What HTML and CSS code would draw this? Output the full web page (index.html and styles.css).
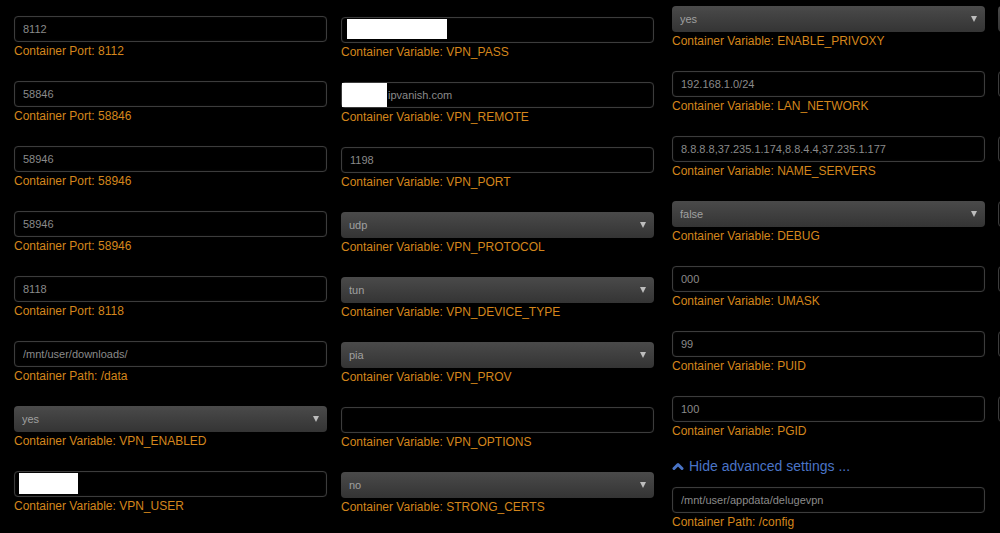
FILE: index.html
```html
<!DOCTYPE html>
<html lang="en">
    <head>
        <meta charset="UTF-8">
        <meta name="viewport" content="width=device-width, initial-scale=1.0">
        <title>Docker - DelugeVPN</title>
        <link rel="stylesheet" href="styles.css">
    </head>
<body>
    <div class="columns">
        <!-- ports and first vpn vars -->
        <div class="column col-1">
            <div class="field">
                <div class="control"><input class="text-input" type="text" value="8112"></div>
                <div class="hint">Container Port: 8112</div>
            </div>
            <div class="field">
                <div class="control"><input class="text-input" type="text" value="58846"></div>
                <div class="hint">Container Port: 58846</div>
            </div>
            <div class="field">
                <div class="control"><input class="text-input" type="text" value="58946"></div>
                <div class="hint">Container Port: 58946</div>
            </div>
            <div class="field">
                <div class="control"><input class="text-input" type="text" value="58946"></div>
                <div class="hint">Container Port: 58946</div>
            </div>
            <div class="field">
                <div class="control"><input class="text-input" type="text" value="8118"></div>
                <div class="hint">Container Port: 8118</div>
            </div>
            <div class="field">
                <div class="control"><input class="text-input" type="text" value="/mnt/user/downloads/"></div>
                <div class="hint">Container Path: /data</div>
            </div>
            <div class="field">
                <div class="control select-wrap">
                    <select class="select-input"><option selected>yes</option><option>no</option></select>
                </div>
                <div class="hint">Container Variable: VPN_ENABLED</div>
            </div>
            <div class="field">
                <div class="control">
                    <input class="text-input" type="text" value="">
                    <span class="redact redact-user"></span>
                </div>
                <div class="hint">Container Variable: VPN_USER</div>
            </div>
        </div>

        <div class="column col-2">
            <div class="field">
                <div class="control">
                    <input class="text-input" type="password" value="">
                    <span class="redact redact-pass"></span>
                </div>
                <div class="hint">Container Variable: VPN_PASS</div>
            </div>
            <div class="field">
                <div class="control">
                    <input class="text-input after-redact" type="text" value="ipvanish.com">
                    <span class="redact redact-remote"></span>
                </div>
                <div class="hint">Container Variable: VPN_REMOTE</div>
            </div>
            <div class="field">
                <div class="control"><input class="text-input" type="text" value="1198"></div>
                <div class="hint">Container Variable: VPN_PORT</div>
            </div>
            <div class="field">
                <div class="control select-wrap">
                    <select class="select-input"><option selected>udp</option><option>tcp</option></select>
                </div>
                <div class="hint">Container Variable: VPN_PROTOCOL</div>
            </div>
            <div class="field">
                <div class="control select-wrap">
                    <select class="select-input"><option selected>tun</option><option>tap</option></select>
                </div>
                <div class="hint">Container Variable: VPN_DEVICE_TYPE</div>
            </div>
            <div class="field">
                <div class="control select-wrap">
                    <select class="select-input"><option selected>pia</option><option>airvpn</option><option>custom</option></select>
                </div>
                <div class="hint">Container Variable: VPN_PROV</div>
            </div>
            <div class="field">
                <div class="control"><input class="text-input" type="text" value=""></div>
                <div class="hint">Container Variable: VPN_OPTIONS</div>
            </div>
            <div class="field">
                <div class="control select-wrap">
                    <select class="select-input"><option selected>no</option><option>yes</option></select>
                </div>
                <div class="hint">Container Variable: STRONG_CERTS</div>
            </div>
        </div>

        <div class="column col-3">
            <div class="field">
                <div class="control select-wrap">
                    <select class="select-input"><option selected>yes</option><option>no</option></select>
                </div>
                <div class="hint">Container Variable: ENABLE_PRIVOXY</div>
            </div>
            <div class="field">
                <div class="control"><input class="text-input" type="text" value="192.168.1.0/24"></div>
                <div class="hint">Container Variable: LAN_NETWORK</div>
            </div>
            <div class="field">
                <div class="control"><input class="text-input" type="text" value="8.8.8.8,37.235.1.174,8.8.4.4,37.235.1.177"></div>
                <div class="hint">Container Variable: NAME_SERVERS</div>
            </div>
            <div class="field">
                <div class="control select-wrap">
                    <select class="select-input"><option selected>false</option><option>true</option></select>
                </div>
                <div class="hint">Container Variable: DEBUG</div>
            </div>
            <div class="field">
                <div class="control"><input class="text-input" type="text" value="000"></div>
                <div class="hint">Container Variable: UMASK</div>
            </div>
            <div class="field">
                <div class="control"><input class="text-input" type="text" value="99"></div>
                <div class="hint">Container Variable: PUID</div>
            </div>
            <div class="field">
                <div class="control"><input class="text-input" type="text" value="100"></div>
                <div class="hint">Container Variable: PGID</div>
            </div>

            <a href="#" class="advanced-toggle">
                <svg width="12" height="10" viewBox="0 0 12 10" fill="none" stroke="currentColor" stroke-width="3" stroke-linecap="round" stroke-linejoin="round">
                    <polyline points="2 7.5 6 3.5 10 7.5"></polyline>
                </svg>
                <span>Hide advanced settings ...</span>
            </a>

            <div class="field">
                <div class="control"><input class="text-input" type="text" value="/mnt/user/appdata/delugevpn"></div>
                <div class="hint">Container Path: /config</div>
            </div>
        </div>

        <!-- next column, only its left edge shows in the window -->
        <div class="column col-4">
            <div class="field">
                <div class="control select-wrap">
                    <select class="select-input"><option selected>&nbsp;</option></select>
                </div>
                <div class="hint">&nbsp;</div>
            </div>
            <div class="field"><div class="control"><input class="text-input" type="text" value=""></div><div class="hint">&nbsp;</div></div>
            <div class="field"><div class="control"><input class="text-input" type="text" value=""></div><div class="hint">&nbsp;</div></div>
            <div class="field"><div class="control"><input class="text-input" type="text" value=""></div><div class="hint">&nbsp;</div></div>
            <div class="field"><div class="control"><input class="text-input" type="text" value=""></div><div class="hint">&nbsp;</div></div>
            <div class="field"><div class="control"><input class="text-input" type="text" value=""></div><div class="hint">&nbsp;</div></div>
            <div class="field"><div class="control"><input class="text-input" type="text" value=""></div><div class="hint">&nbsp;</div></div>
        </div>
    </div>
</body>
</html>
```

FILE: styles.css
```css
* {
    margin: 0;
    padding: 0;
    box-sizing: border-box;
    font-family: 'Liberation Sans', Arial, Helvetica, sans-serif;
}

html,
body {
    background-color: #000;
    overflow: hidden;
}

body {
    width: 1000px;
    height: 533px;
}

.columns {
    display: flex;
    align-items: flex-start;
    padding-left: 14px;
}

.column {
    flex: 0 0 313px;
    width: 313px;
    display: flex;
    flex-direction: column;
}

.col-1 {
    padding-top: 16px;
}

.col-2 {
    margin-left: 14px;
    padding-top: 17px;
}

.col-3 {
    margin-left: 18px;
    padding-top: 6px;
}

.col-4 {
    flex: 0 0 2px;
    width: 2px;
    margin-left: 13px;
    padding-top: 6px;
    overflow: hidden;
}

.col-4 .field {
    width: 313px;
}

.field {
    margin-bottom: 23px;
}

.control {
    position: relative;
    height: 26px;
}

.text-input {
    display: block;
    width: 100%;
    height: 26px;
    padding: 0 8px;
    background-color: #000;
    border: 1px solid #3c3c3c;
    border-radius: 4px;
    box-shadow: inset 0 0 2px rgba(255, 255, 255, 0.08), 0 0 1px rgba(255, 255, 255, 0.08);
    color: #8a8a8a;
    font-size: 11px;
    outline: none;
}

.text-input.after-redact {
    padding-left: 46px;
}

.select-input {
    display: block;
    width: 100%;
    height: 26px;
    padding: 0 8px;
    -webkit-appearance: none;
    appearance: none;
    background: linear-gradient(#4a4a4a, #343434);
    border: none;
    border-radius: 4px;
    color: #a0a0a0;
    font-size: 11px;
    outline: none;
}

.select-wrap::after {
    content: '';
    position: absolute;
    right: 8px;
    top: 10px;
    border-left: 3.5px solid transparent;
    border-right: 3.5px solid transparent;
    border-top: 6px solid #bdbdbd;
    pointer-events: none;
}

.hint {
    margin-top: 2px;
    color: #d4861c;
    font-size: 12px;
    line-height: 14px;
    white-space: nowrap;
}

/* white boxes hiding credentials in the screenshot */
.redact {
    position: absolute;
    background-color: #fff;
}

.redact-user {
    left: 5px;
    top: 2px;
    width: 59px;
    height: 21px;
}

.redact-pass {
    left: 6px;
    top: 2px;
    width: 100px;
    height: 20px;
}

.redact-remote {
    left: 1px;
    top: 1px;
    width: 45px;
    height: 24px;
}

.advanced-toggle {
    display: flex;
    align-items: center;
    gap: 5px;
    margin: -4px 0 12px;
    height: 18px;
    color: #4a74c6;
    font-size: 14px;
    text-decoration: none;
}

.advanced-toggle svg {
    flex-shrink: 0;
}
```
